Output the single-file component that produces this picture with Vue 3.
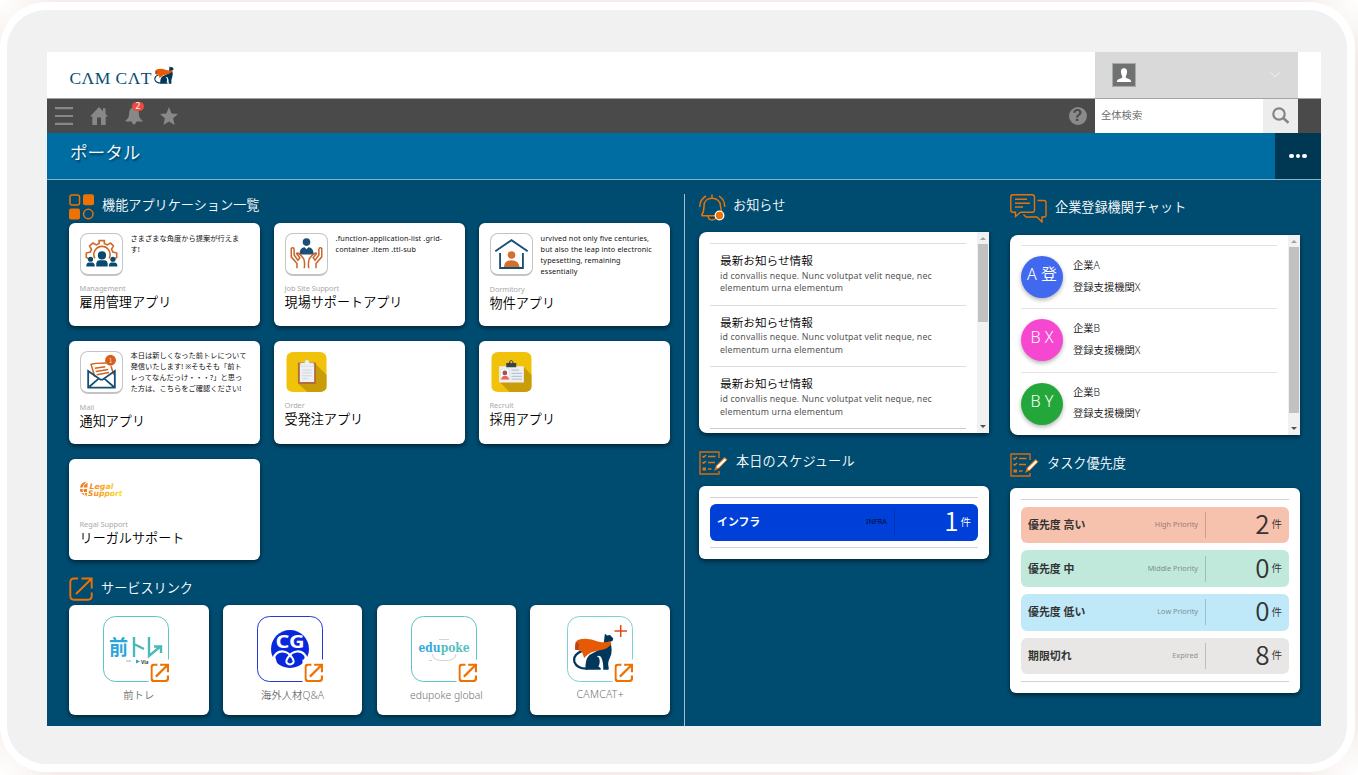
<script setup>
const apps = [
  { icon: 'team', sub: 'Management', title: '雇用管理アプリ', lines: ['さまざまな角度から提案が行えま', 'す!'] },
  { icon: 'hands', sub: 'Job Site Support', title: '現場サポートアプリ', lines: ['.function-application-list .grid-', 'container .item .ttl-sub'], latin: true },
  { icon: 'home', sub: 'Dormitory', title: '物件アプリ', lines: ['urvived not only five centuries,', 'but also the leap into electronic', 'typesetting, remaining', 'essentially'], low: true, latin: true },
  { icon: 'mail', sub: 'Mail', title: '通知アプリ', lines: ['本日は新しくなった前トレについて', '発信いたします! ※そもそも「前ト', 'レってなんだっけ・・・?」と思っ', 'た方は、こちらをご確認ください!'], low: true },
  { icon: 'order', sub: 'Order', title: '受発注アプリ', lines: [] },
  { icon: 'recruit', sub: 'Recruit', title: '採用アプリ', lines: [] },
  { icon: 'legal', sub: 'Regal Support', title: 'リーガルサポート', lines: [] },
]
const services = [
  { id: 'maetore', name: '前トレ', color: '#5fc4c6' },
  { id: 'cg', name: '海外人材Q&A', color: '#2238d8' },
  { id: 'edupoke', name: 'edupoke global', color: '#5fc4c6' },
  { id: 'camcat', name: 'CAMCAT+', color: '#7fd0d2' },
]
const chats = [
  { initials: 'A 登', company: '企業A', org: '登録支援機関X', tone: 'blue' },
  { initials: 'B X', company: '企業B', org: '登録支援機関X', tone: 'pink' },
  { initials: 'B Y', company: '企業B', org: '登録支援機関Y', tone: 'green' },
]
const tasks = [
  { name: '優先度 高い', en: 'High Priority', count: 2, tone: 'high' },
  { name: '優先度 中', en: 'Middle Priority', count: 0, tone: 'middle' },
  { name: '優先度 低い', en: 'Low Priority', count: 0, tone: 'low' },
  { name: '期限切れ', en: 'Expired', count: 8, tone: 'exp' },
]
</script>

<template>
  <svg class="defs" width="0" height="0">
    <symbol id="cat" viewBox="606 96 128 116">
      <path d="M634 152Q606 164 612 186Q620 207 652 206" fill="none" stroke="#02375c" stroke-width="7" />
      <path d="M646 210Q644 178 658 164Q684 150 702 142L703 122L706 98L713 104L722 102L732 113L730 120L722 124Q732 150 722 172Q713 188 718 205L717 210H701Q702 186 694 170Q688 164 680 168Q690 170 690 184Q690 194 686 200L693 204V210Z" fill="#02375c" />
      <path class="cape" d="M622 118Q650 108 684 122Q708 128 722 121L726 129Q715 147 690 149Q658 153 642 173L634 152L614 147Q612 126 622 118Z" />
      <path d="M616 122L626 130L624 149L614 147Z" fill="#b44813" />
    </symbol>
    <symbol id="external" viewBox="0 0 24 24">
      <path d="M9 1.500H5Q1.300 1.500 1.300 5V19Q1.300 22.700 5 22.700H19Q22.700 22.700 22.700 19V15.500M12.500 1.500H22.700V11.500M22.500 1.700L7 17" fill="none" stroke="#ee7203" stroke-width="var(--sw)" />
    </symbol>
    <symbol id="checklist" viewBox="0 0 29 24">
      <path d="M20 7V1H1V23H20V20" fill="none" stroke="#d76a10" stroke-width="1.400" />
      <path d="M3.500 5L4.700 6.200L7 4M3.500 11L4.700 12.200L7 10M9 5.500H16.500M9 11.500H16M9 18H12.500" fill="none" stroke="#e8710c" stroke-width="1.400" />
      <path d="M3.500 16.500H7V19.500H3.500Z" fill="#e8710c" />
      <path d="M15 20L17 14.500L25.500 6L28.500 8.500L20 17.500Z" fill="#e8710c" />
      <path d="M17.500 17L18 15L25.700 7.400L27.400 8.900L19.500 16.700Z" fill="#fff" />
    </symbol>
  </svg>

  <div class="backdrop">
    <div class="bezel">
      <main class="screen">
        <header class="brandbar">
          <div class="brand"><span>CΛM CΛT</span><svg class="brandcat"><use href="#cat" /></svg></div>
          <div class="user">
            <svg class="avatar" viewBox="0 0 24 24"><path d="M0 0H24V24H0Z" fill="#707272" /><path d="M12 4.500C9 4.500 8.300 7 8.800 9.800Q9.400 12.500 10 13.200V15L5 17.300L4 19.500H20L19 17.300L14 15V13.200Q14.700 12.400 15.200 9.800C15.700 7 15 4.500 12 4.500Z" fill="#fff" /></svg>
            <svg class="caret" viewBox="0 0 10 6"><path d="M.5 .5L5 5L9.500 .5" fill="none" stroke="#f0f0f0" stroke-width="1" /></svg>
          </div>
        </header>

        <nav class="toolbar">
          <svg viewBox="0 0 18 18"><path d="M0 1.200H18M0 9H18M0 16.800H18" stroke="#888" stroke-width="2.200" /></svg>
          <svg viewBox="0 0 18 18"><path d="M9 0L13 4.200V1.200H15.500V6.800L18 9.500H15.700V18H11V10.500H7V18H2.300V9.500H0Z" fill="#888" /></svg>
          <div class="bell">
            <svg viewBox="0 0 18 18"><path d="M9 0C6 .5 4.300 2.500 4.200 6C4.100 10 3 12 .5 13.500V14.500H6.500Q9 20.500 11.500 14.500H17.500V13.500C15 12 13.900 10 13.800 6C13.700 2.500 12 .5 9 0Z" fill="#888" /></svg>
            <span class="badge">2</span>
          </div>
          <svg viewBox="0 0 18 18"><path d="M9 0L11.600 6.500L18 6.900L13.100 11.200L14.600 18L9 14.400L3.400 18L4.900 11.200L0 6.900L6.400 6.500Z" fill="#888" /></svg>
          <div class="grow"></div>
          <span class="help">?</span>
          <div class="search"><span>全体検索</span></div>
          <div class="lens"><svg viewBox="0 0 18 18"><circle cx="7" cy="7" r="5.700" fill="none" stroke="#858585" stroke-width="2.200" /><path d="M11.200 11L16.500 15.800" stroke="#858585" stroke-width="2.500" /></svg></div>
        </nav>

        <div class="titlebar">
          <h1>ポータル</h1>
          <div class="more"><i></i><i></i><i></i></div>
        </div>

        <div class="portal">
          <section class="left">
            <h2 class="head apps-head">
              <svg width="26" height="26" viewBox="0 0 26 26"><g fill="none" stroke="#ee7203" stroke-width="1.500"><rect x="1" y="1" width="9.500" height="10" rx="2" /><circle cx="19.300" cy="20" r="4.700" /></g><g fill="#ee7203"><rect x="14" y=".3" width="11" height="11" rx="2" /><rect x="0" y="14.500" width="11" height="11" rx="2" /></g></svg>
              <span>機能アプリケーション一覧</span>
            </h2>
            <div class="app-grid">
              <article v-for="app in apps" :key="app.title" class="card app" :class="{ lowered: app.low }">
                <div class="app-top">
                  <div class="app-icon" :class="app.icon">
                    <svg v-if="app.icon === 'team'" viewBox="0 0 42 42">
                      <path d="M9 27L5 24.500V20L9.200 19L10.500 16L8.500 12.500L12 9.500L15.500 11.500L18.500 10V7H24V10L27 11.500L30.500 9.500L33.500 12.500L31.500 16L33 19L37 20V24.500L34 27" fill="none" stroke="#cf6a2b" stroke-width="1.700" />
                      <path d="M14 25.500A8.500 8.500 0 1 1 29 25.500" fill="none" stroke="#cf6a2b" stroke-width="1.700" />
                      <g fill="#0a4a6c"><circle cx="21.500" cy="22.500" r="4.300" /><path d="M15.500 34V31Q16 27.500 19 27.500H24Q27 27.500 27.500 31V34Z" /><circle cx="9.500" cy="26.500" r="2.700" /><path d="M5 34Q5 30 8 30H11Q14 30 14 34Z" /><circle cx="33" cy="26.500" r="2.700" /><path d="M28.700 34Q28.700 30 31.500 30H34.500Q37.700 30 37.700 34Z" /></g>
                    </svg>
                    <svg v-else-if="app.icon === 'hands'" viewBox="0 0 42 42">
                      <g fill="#1d4e74"><circle cx="21" cy="8.500" r="4" /><path d="M13.500 21.500Q14 14 19 14L21 16L23 14Q28 14 28.700 21.500Z" /></g>
                      <g fill="none" stroke="#c9662c" stroke-width="1.600"><path d="M11 36V31L5 24V15Q7.200 13.500 8 16V22L12 27.500L14 25L10.500 20.500Q12.500 18.500 18 26Q19.500 29 18.700 36" /><path d="M31 36V31L37 24V15Q34.800 13.500 34 16V22L30 27.500L28 25L31.500 20.500Q29.500 18.500 24 26Q22.500 29 23.300 36" /></g>
                    </svg>
                    <svg v-else-if="app.icon === 'home'" viewBox="0 0 42 42">
                      <path d="M4 18L21 6.500L38 18M9 20V35.700H33V20" fill="none" stroke="#164f72" stroke-width="1.900" />
                      <g fill="#d4702e"><circle cx="21" cy="22" r="4" /><path d="M13 34.700Q13.500 27.500 21 27.500Q28.500 27.500 29.500 34.700Z" /></g>
                    </svg>
                    <svg v-else-if="app.icon === 'mail'" viewBox="0 0 42 42">
                      <path d="M14 26L10 13Q12 11.500 26 11.500M31 15L34 24" fill="none" stroke="#d3621f" stroke-width="1.600" />
                      <path d="M14 17L25 15.500M15 20.500L28 18.500M16 24L29 21.500" stroke="#d3621f" stroke-width="1.600" />
                      <circle cx="30.500" cy="8.700" r="5.700" fill="#d4601b" /><text x="30.500" y="11.300" text-anchor="middle" font-size="7" fill="#f7cdb0" font-weight="400">1</text>
                      <path d="M7 20V37.500H35V20L22 29H20ZM7 37.500L18 28M35 37.500L24 28" fill="none" stroke="#164f72" stroke-width="1.900" />
                    </svg>
                    <svg v-else-if="app.icon === 'order'" viewBox="0 0 42 42">
                      <path d="M0 0H42V42H0Z" fill="#f0c30a" /><path d="M30 12L42 24V42H22L12 33Z" fill="#c99c0a" />
                      <rect x="12" y="11" width="19" height="22.500" rx="1" fill="#b46c3b" /><path d="M14 12H29V31.500H14Z" fill="#eef1f3" /><path d="M16.500 19H26.500M16.500 22H26.500M16.500 25H26.500M16.500 28H23" stroke="#ccd5da" /><path d="M15 11.500H19L20 8.500H23L24 11.500H28V15H15Z" fill="#ecf0f1" stroke="#cbd3d6" stroke-width=".5" />
                    </svg>
                    <svg v-else-if="app.icon === 'recruit'" viewBox="0 0 42 42">
                      <path d="M0 0H42V42H0Z" fill="#f0c30a" /><path d="M33 15L42 24V42H19L8 31Z" fill="#c99c0a" />
                      <path d="M8 15H34V32H8Z" fill="#ecf0f4" /><path d="M9.500 18H18.500V29H9.500Z" fill="#fff" stroke="#c4cfda" stroke-width=".5" /><circle cx="14" cy="22" r="2.500" fill="#9b5a44" /><path d="M10 29Q10.500 25 14 25Q18 25 18.500 29Z" fill="#f0645b" /><path d="M21 19H29M21 22.500H32M21 25.500H32M21 28.500H32" stroke="#b9c5cf" stroke-width="1.300" /><path d="M15.500 11.500H18Q20.500 5.500 23.500 11.500H26V16H15.500Z" fill="#39414a" /><circle cx="20.800" cy="10.700" r="1.200" fill="#f0c30a" />
                    </svg>
                    <svg v-else viewBox="0 0 43 43">
                      <defs><linearGradient id="sun" gradientUnits="userSpaceOnUse" x1="0" x2="42" y1="0" y2="0"><stop offset="0" stop-color="#f07520" /><stop offset=".45" stop-color="#f49a22" /><stop offset="1" stop-color="#f6e52a" /></linearGradient></defs>
                      <path d="M6.500 12.500Q1 13.500 0 18.500H2.500Q3.500 15.500 6.500 12.500ZM0 20H2.500L3 23H.5ZM3.500 20H7V23H4ZM3.500 18.500Q4.500 15 7.500 13.500V18.500ZM1.300 24H3.400L4.800 27ZM4.500 24H7L6.500 28Z" fill="url(#sun)" />
                      <g font-size="7.600" font-weight="bold" font-style="italic" fill="url(#sun)"><text x="9.500" y="19.500" textLength="24" lengthAdjust="spacingAndGlyphs">Legal</text><text x="8" y="26.700" textLength="34.500" lengthAdjust="spacingAndGlyphs">Support</text></g>
                    </svg>
                  </div>
                  <div class="desc" :class="{ latin: app.latin }"><p v-for="l in app.lines" :key="l">{{ l }}</p></div>
                </div>
                <p class="sub">{{ app.sub }}</p>
                <h3>{{ app.title }}</h3>
              </article>
            </div>
            <h2 class="head service-head"><svg class="ext-lg" width="24" height="24"><use href="#external" /></svg><span>サービスリンク</span></h2>
            <div class="service-grid">
              <article v-for="s in services" :key="s.id" class="card service" :class="s.id">
                <svg width="67" height="67" viewBox="0 0 67 67">
                  <rect x=".5" y=".5" width="65" height="65" rx="12" fill="none" :stroke="s.color" />
                  <template v-if="s.id === 'maetore'">
                    <text x="6" y="38.500" font-size="20" font-weight="bold" fill="#29a5dc" textLength="19" lengthAdjust="spacingAndGlyphs">前</text>
                    <g fill="none" stroke="#4ab9b8" stroke-width="2.400"><path d="M31 21V41M31 28L41 33M46 21V40L58 30M51 30.500H58V37" /></g>
                    <path d="M33 43.500L37 45.500L33 47.500Z" fill="#29a5dc" /><path d="M23 45H28" stroke="#999" stroke-width=".8" /><text x="38" y="47.700" font-size="5" font-weight="bold" fill="#333">Via</text>
                  </template>
                  <template v-else-if="s.id === 'cg'">
                    <circle cx="33" cy="33" r="19" fill="#0728df" /><text x="33" y="32" text-anchor="middle" font-size="17" font-weight="bold" fill="#fff" textLength="29" lengthAdjust="spacingAndGlyphs">CG</text>
                    <path d="M16 43Q19 35 26 35.500Q31 36 33 39.500Q35 36 40 35.500Q47 35 50 43" fill="none" stroke="#fff" stroke-width="2.200" /><path d="M12 42L18 40L20 47L16 50ZM54 42L48 40L46 47L50 50Z" fill="#fff" />
                    <path d="M33 39Q37.500 44 36.500 46.500Q33 50.500 29.500 46.500Q28.500 44 33 39Z" fill="none" stroke="#fff" stroke-width="2" />
                  </template>
                  <template v-else-if="s.id === 'edupoke'">
                    <defs><linearGradient id="edu"><stop offset=".4" stop-color="#35a9dc" /><stop offset=".46" stop-color="#58bec0" /></linearGradient></defs>
                    <text class="slab" transform="translate(7.500 36) scale(1 1.25)" font-size="10.750" font-weight="bold" fill="url(#edu)">edupoke</text>
                    <path d="M21.500 38Q22 44.500 31 44.500H36Q44 44.500 45 38M28 23.500H38" fill="none" stroke="#d4d4d6" stroke-width="1.200" /><path d="M18 44.500H21M46 44.500H49" stroke="#a8dedf" />
                  </template>
                  <template v-else>
                    <use href="#cat" x="5.500" y="17" width="41.500" height="37.500" /><path d="M47.500 15H60M53.700 9V21" stroke="#dc4b0c" stroke-width="1.500" />
                  </template>
                  <path d="M45.500 43.500H67V67H45.500Z" fill="#fff" />
                  <use class="ext-sm" href="#external" x="47.500" y="47.500" width="18.500" height="18.500" />
                </svg>
                <p>{{ s.name }}</p>
              </article>
            </div>
          </section>

          <section class="mid">
            <h2 class="head news-head">
              <svg width="27" height="28" viewBox="0 0 27 28"><g fill="none" stroke="#ee7203" stroke-width="1.500"><path d="M13 .5V4M2.500 21.700Q5 18 5 12C5 7 8.500 4.200 13 4.200S21.500 7 21.500 12L22.500 18M2.500 21.700H17M9 22Q9.500 26 13 26Q16 26 17 24" /><path d="M7 2Q.5 6 .8 13M20 2Q26 6 25.700 13" /></g><circle cx="20.500" cy="21.500" r="4.300" fill="#ee7203" stroke="#fff" stroke-width="1.300" /></svg>
              <span>お知らせ</span>
            </h2>
            <div class="card scrolling">
              <div class="news">
                <article v-for="n in 3" :key="n"><h3>最新お知らせ情報</h3><p>id convallis neque. Nunc volutpat velit neque, nec</p><p>elementum urna elementum</p></article>
                <hr />
              </div>
              <div class="rail"><i class="up-arrow"></i><b class="thumb short"></b><i class="down-arrow"></i></div>
            </div>
            <h2 class="head list-head"><svg width="29" height="24"><use href="#checklist" /></svg><span>本日のスケジュール</span></h2>
            <div class="card counts">
              <div class="count infra"><strong>インフラ</strong><small>INFRA</small><div class="num"><b>1</b><span>件</span></div></div>
            </div>
          </section>

          <section class="right">
            <h2 class="head chat-head">
              <svg width="37" height="29" viewBox="0 0 37 29"><path d="M3 .8H22Q24.500 .8 24.500 3V16Q24.500 18.200 22.500 18.200H10.500L5.500 22.500V18.200H3Q.8 18.200 .8 16V3Q.8 .8 3 .8ZM5 5.200H17M5 9.200H20M5 13H13M27.500 6.500H34Q36 6.500 36 8.500V21Q36 23 34 23H32V28L27 23H16L13.500 20.500" fill="none" stroke="#e8710c" stroke-width="1.400" /></svg>
              <span>企業登録機関チャット</span>
            </h2>
            <div class="card scrolling">
              <div class="chats">
                <article v-for="c in chats" :key="c.initials"><span class="dot" :class="c.tone">{{ c.initials }}</span><div><p>{{ c.company }}</p><p>{{ c.org }}</p></div></article>
              </div>
              <div class="rail"><i class="up-arrow"></i><b class="thumb long"></b><i class="down-arrow"></i></div>
            </div>
            <h2 class="head list-head"><svg width="29" height="24"><use href="#checklist" /></svg><span>タスク優先度</span></h2>
            <div class="card counts tall">
              <div v-for="t in tasks" :key="t.en" class="count" :class="t.tone"><strong>{{ t.name }}</strong><small>{{ t.en }}</small><div class="num"><b>{{ t.count }}</b><span>件</span></div></div>
            </div>
          </section>
        </div>
      </main>
    </div>
  </div>
</template>

<style>
body { overflow: hidden; }
</style>
<style scoped>
* { box-sizing: border-box; margin: 0; }
.defs { position: absolute; }
svg { display: block; flex: none; }
.backdrop { width: 1358px; height: 775px; padding: 2px 3px 2px 0; background: radial-gradient(circle at 0 0, #fff, transparent 60px), radial-gradient(circle at 100% 0, #fff, transparent 60px), radial-gradient(circle at 0 100%, #fff, transparent 60px), radial-gradient(circle at 100% 100%, #fff, transparent 60px), #f4ece8; font-family: "Noto Sans", "Noto Sans CJK JP", sans-serif; font-weight: 350; }
.bezel { width: 1355px; height: 770px; border: 8px solid #fff; border-left-width: 7px; border-radius: 46px; background: #f1f1f1; padding: 42px 0 0 40px; }
.screen { width: 1274px; height: 674px; background: #004c71; }
.brandbar { height: 47px; background: #fff; border-bottom: 1px solid #a3a3a3; display: flex; justify-content: space-between; }
.brand { display: flex; padding: 14px 0 0 22.500px; color: #084e74; font: 17.500px/24px "Liberation Serif", serif; white-space: nowrap; }
.brand span { width: 84.500px; letter-spacing: .45px; }
.cape { fill: #e65a05; }
.brandcat { width: 20px; height: 18px; fill: #ee7203; }
.user { width: 203px; height: 46px; margin-right: 23px; background: #d9d9d9; display: flex; align-items: center; justify-content: space-between; padding: 0 18px 0 17px; }
.avatar { width: 24px; height: 24px; border: 1px solid #aaa; }
.caret { width: 10px; height: 6px; }
.toolbar { height: 34px; background: #4a4a4a; display: flex; align-items: center; padding-left: 8.400px; padding-right: 23px; }
.toolbar > svg, .bell svg { width: 18px; height: 18px; }
.toolbar > svg, .bell { margin-right: 17px; }
.bell { position: relative; }
.badge { position: absolute; left: 6.500px; top: -5px; width: 12px; height: 9px; border-radius: 4.500px; background: #e94b3f; color: #fff; font-size: 8.500px; font-weight: 400; line-height: 8.500px; text-align: center; }
.grow { flex: 1; }
.help { width: 18px; height: 18px; border-radius: 9px; background: #8a8a8a; color: #4a4a4a; font: bold 16px/18px "Liberation Sans", sans-serif; text-align: center; margin-right: 8.500px; }
.search { width: 168px; height: 34px; background: #fff; padding: 8px 6px; font-size: 10.300px; line-height: 16px; color: #666; }
.lens { width: 35px; height: 34px; background: #ededed; padding: 8px 9px; }
.lens svg { width: 18px; height: 18px; }
.titlebar { height: 47px; background: #006da2; border-bottom: 1px solid #8db3c8; display: flex; justify-content: space-between; }
.titlebar h1 { margin: 6px 0 0 23px; color: #fff; font-size: 17.600px; line-height: 26px; font-weight: 350; text-shadow: 1px 2px 2px #003b5a; }
.more { width: 46px; height: 46px; background: #003753; display: flex; gap: 1.700px; align-items: center; justify-content: center; }
.more i { width: 4.700px; height: 4.700px; border-radius: 50%; background: #fff; }
.portal { height: 546px; display: grid; grid-template-columns: 616px 14px 290px 21px 290px; padding: 14px 0 0 22px; }
.left { grid-column: 1; height: 532px; border-right: 1px solid #a6bdcb; padding-right: 14px; }
.mid { grid-column: 3; }
.right { grid-column: 5; }
.head { display: flex; color: #fff; font-size: 13.150px; font-weight: 350; line-height: 20px; white-space: nowrap; }
.apps-head { height: 29px; gap: 7px; }
.apps-head span, .service-head span { margin-top: 1px; }
.card { background: #fff; border-radius: 6px; box-shadow: 0 2px 5px rgba(0, 0, 0, .55); }
.app-grid { display: grid; grid-template-columns: repeat(3, 191px); justify-content: space-between; grid-template-rows: 103px 103px 101.500px; row-gap: 14.800px; }
.app { padding: 10px 0 0 10.600px; }
.app-top { display: flex; height: 44px; }
.app-icon { width: 43px; height: 43px; border: 1px solid #c4c4c4; border-bottom-width: 2px; border-radius: 8px; flex: none; overflow: hidden; }
.app-icon.order, .app-icon.recruit { border-color: #fff; border-left-width: 1px; border-right-width: 1px; }
.app-icon.legal { border-color: transparent; border-width: 0; overflow: visible; }
.app-icon svg { width: 100%; height: 100%; font-family: "DejaVu Sans", sans-serif; }
.desc { font-size: 7.250px; line-height: 11px; margin-left: 8px; margin-top: -.5px; white-space: nowrap; color: #111; font-weight: 400; }
.latin { letter-spacing: .13px; }
.app .sub { margin-top: 6px; height: 11px; color: #aaa; font-size: 7.400px; font-weight: 400; line-height: 11px; letter-spacing: -.07px; }
.app h3 { font-size: 13.100px; font-weight: 350; line-height: 17px; color: #000; }
.lowered .sub { margin-top: 7px; }
.app-top:has(.order, .recruit) + .sub { margin-top: 5px; }
.service-head { height: 27.500px; margin-top: 17px; gap: 8px; }
.ext-lg { --sw: 1.9; }
.ext-sm { --sw: 2.9; }
.service-grid { display: grid; grid-template-columns: repeat(4, 139.500px); justify-content: space-between; }
.service { height: 110px; padding-top: 11px; display: flex; flex-direction: column; align-items: center; }
.service svg { position: relative; left: -2px; }
.service.camcat svg { left: 0; }
.service p { margin-top: 4px; color: #707070; font-size: 10.350px; line-height: 16px; }
.service.camcat p { margin-top: 3px; letter-spacing: .3px; }
.slab { font-family: "DejaVu Serif", serif; }
.news-head { height: 38px; gap: 7px; line-height: 23px; }
.chat-head { height: 41px; gap: 8px; line-height: 27px; }
.list-head { margin-top: 18px; height: 35px; gap: 8px; line-height: 20px; }
.mid .list-head { letter-spacing: .15px; }
.scrolling { height: 200.500px; border-radius: 8px 0 0 8px; overflow: hidden; display: flex; justify-content: space-between; }
.right .scrolling { height: 200px; }
.news, .chats { width: 256px; margin: 11px 0 0 11px; }
.chats { margin-top: 10px; }
.news article { height: 61.700px; border-top: 1px solid #ddd; padding: 8px 0 0 10px; white-space: nowrap; }
.news h3 { font-size: 11.650px; line-height: 17px; font-weight: 350; color: #000; }
.news p { font-size: 8.800px; font-weight: 400; line-height: 12.700px; color: #555; letter-spacing: .16px; position: relative; top: .5px; }
.news hr { border: 0; border-top: 1px solid #ccc; }
.rail { width: 12px; background: #f1f1f1; display: flex; flex-direction: column; align-items: center; padding: 4px 0; }
.up-arrow { border: 3px solid transparent; border-top: 0; border-bottom: 3px solid #a3a3a3; margin: 1px 0 4px; }
.down-arrow { border: 3px solid transparent; border-bottom: 0; border-top: 3px solid #505050; margin-top: auto; margin-bottom: 1px; }
.thumb { width: 10px; background: #c1c1c1; }
.short { height: 78px; }
.long { height: 166px; }
.chats article { height: 63.300px; border-top: 1px solid #e2e2e2; display: flex; align-items: center; gap: 10px; font-size: 10.300px; color: #111; }
.chats p { line-height: 21.600px; white-space: nowrap; }
.chats article > div { margin-top: -1px; }
.dot { width: 42px; height: 42px; border-radius: 50%; color: #fff; font-size: 16px; font-weight: 350; line-height: 37px; text-align: center; box-shadow: 0 2px 4px rgba(0, 0, 0, .3); white-space: nowrap; }
.blue { background: #4169ef; }
.pink { background: #f547cf; }
.green { background: #23a73b; }
.counts { padding: 18.500px 11px; height: 73.500px; position: relative; display: flex; flex-direction: column; gap: 6.900px; }
.counts::before, .counts::after { content: ""; position: absolute; left: 11px; right: 11px; height: 1px; background: #d2d2d2; top: 11px; }
.counts::after { top: auto; bottom: 11px; }
.counts.tall { height: 205px; }
.count { height: 36.800px; flex: none; border-radius: 6px; display: flex; align-items: center; padding: 0 7px 0 7px; color: #333; }
.count strong { font-size: 10.900px; font-weight: 700; flex: 1; white-space: nowrap; margin-top: -2px; }
.count small { font-size: 7.300px; font-weight: 400; opacity: .5; padding-right: 7px; white-space: nowrap; margin-top: -2px; }
.num { width: 77px; height: 26px; border-left: 1px solid rgba(0, 0, 0, .18); display: flex; justify-content: flex-end; align-items: center; gap: 2px; }
.num b { font: 350 26px/26px "Noto Sans CJK JP", sans-serif; margin-top: -4px; }
.num span { font-size: 10.500px; margin-top: -2px; }
.infra { background: #0040d9; color: #fff; }
.infra small { color: #000; opacity: .85; }
.high { background: #f7c2ad; }
.middle { background: #c0e9dc; }
.low { background: #bfe9f9; }
.exp { background: #e9e7e6; }
</style>
